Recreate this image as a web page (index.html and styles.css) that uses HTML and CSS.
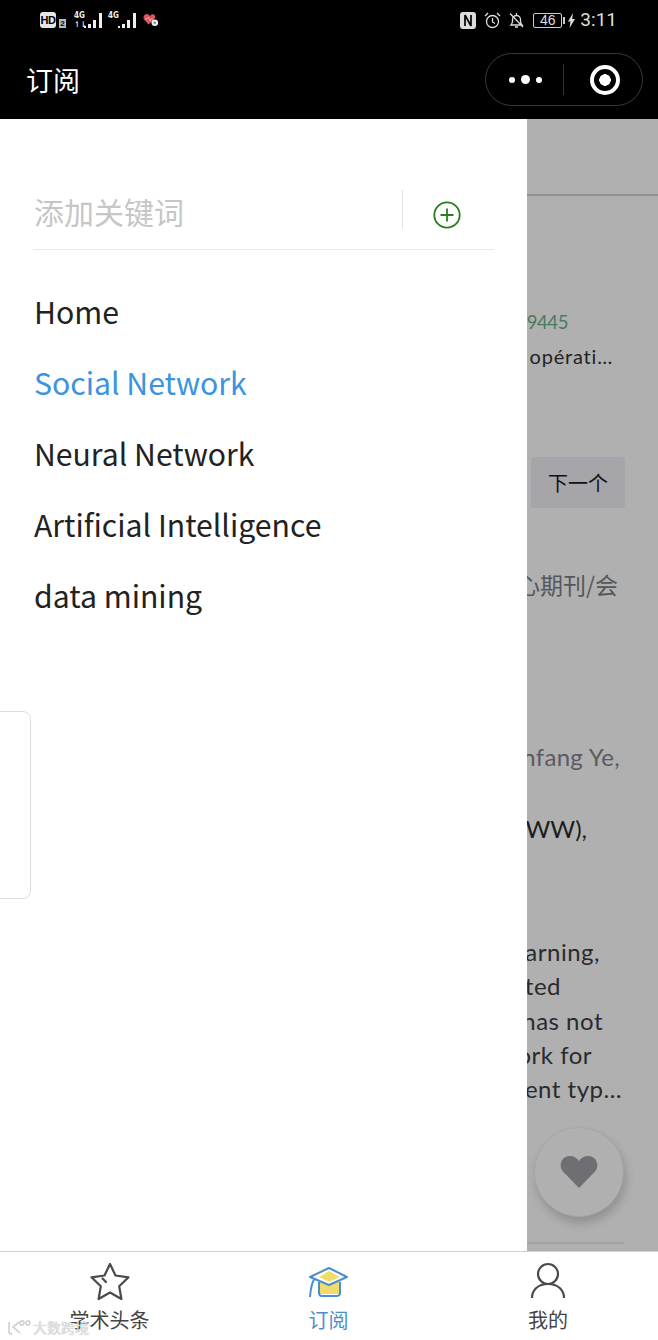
FILE: index.html
```html
<!DOCTYPE html>
<html lang="zh">
<head>
<meta charset="utf-8">
<title>订阅</title>
<link rel="stylesheet" href="styles.css">
</head>
<body>
<div class="phone">
  <header class="top">
    <div class="status">
      <div class="status-left">
        <span class="hd">HD</span><span class="sim">2</span>
        <span class="net"><span class="net-labels"><i>4G</i><i>↿⇂</i></span>
          <svg class="bars" width="19" height="18" viewBox="0 0 19 18"><path d="M0 15h2v2H0zM4 13h3v4H4zM9 9h3v8H9zM15 2h3v15h-3z" fill="#eee"/></svg></span>
        <span class="net"><span class="net-labels"><i>4G</i><i>&nbsp;</i></span>
          <svg class="bars" width="19" height="18" viewBox="0 0 19 18"><path d="M0 15h2v2H0zM4 13h3v4H4zM9 9h3v8H9zM15 2h3v15h-3z" fill="#eee"/></svg></span>
        <svg class="health" width="16" height="14" viewBox="0 0 16 14"><path d="M5.500 11.500 1 6.500C-1 3 3-.5 5.500 1.500L7 3C9 0 13 1 12 5L8 9.500z" fill="#d9545c"/><path d="M2 6h2l1.500-2 1.500 4 1-2h2" fill="none" stroke="#f4c4c4" stroke-width=".7"/><circle cx="11.800" cy="9.800" r="3.300" fill="#eee"/><circle cx="11.800" cy="9.800" r="1.200" fill="#888"/></svg>
      </div>
      <div class="status-right">
        <svg class="nfc" width="16" height="17" viewBox="0 0 16 17"><rect width="16" height="17" rx="3" fill="#ddd"/><path d="M5 3v11M5 3l6 11M11 3v11" fill="none" stroke="#000" stroke-width="1.700"/></svg>
        <svg class="alarm" width="17" height="17" viewBox="0 0 17 17" fill="none" stroke="#ddd" stroke-width="1.300"><circle cx="8.500" cy="9.500" r="6"/><path d="M8.500 6v4l2.500 1.500M1 4l3-3M16 4l-3-3"/></svg>
        <svg class="bell" width="17" height="17" viewBox="0 0 17 17" fill="none" stroke="#ddd" stroke-width="1.300"><path d="M3 13c1-1 1.500-2 1.500-4V7.500a4 4 0 0 1 8 0V9c0 2 .5 3 1.500 4zM7 15h3M8.500 1v2M2 1.500l13 13.500"/></svg>
        <span class="battery"><span class="battery-body">46</span><span class="battery-tip"></span></span>
        <svg class="bolt" width="7" height="15" viewBox="0 0 7 15"><path d="M5 0 0 8.500h2.500L1.500 15 7 6H4.200z" fill="#ddd"/></svg>
        <span class="clock">3:11</span>
      </div>
    </div>
    <div class="nav">
      <h1 class="nav-title">订阅</h1>
      <div class="capsule">
        <div class="capsule-more"><i class="dot"></i><i class="dot dot-big"></i><i class="dot"></i></div>
        <div class="capsule-sep"></div>
        <div class="capsule-close"><i class="ring"></i></div>
      </div>
    </div>
  </header>

  <main class="main">
    <section class="backdrop">
      <div class="under-rule"></div>
      <p class="line l-doi">10.1145/3366423.3389445</p>
      <p class="line l-fr">de opérati…</p>
      <div class="next-row"><span class="next">下一个</span></div>
      <p class="line l-core">是否为核心期刊/会</p>
      <p class="line l-auth">Yanfang Ye,</p>
      <p class="line l-www">(WWW),</p>
      <p class="line l-abs l-first">learning,</p>
      <p class="line l-abs">related</p>
      <p class="line l-abs">has not</p>
      <p class="line l-abs">work for</p>
      <p class="line l-abs">different typ…</p>
      <button class="fab" aria-label="收藏">
        <svg width="38" height="32" viewBox="0 0 38 32"><path d="M19 32 3 15.500C-2 9.500 1.500 0 10 0c4 0 7 2 9 5 2-3 5-5 9-5 8.500 0 12 9.500 7 15.500z" fill="#6e6e73"/></svg>
      </button>
      <div class="under-end"></div>
    </section>
    <aside class="drawer">
      <div class="search">
        <span class="search-input">添加关键词</span>
        <span class="search-sep"></span>
        <span class="search-add">
          <svg width="28" height="28" viewBox="0 0 28 28" fill="none" stroke="#2a7a22" stroke-width="1.800"><circle cx="14" cy="14" r="12.700"/><path d="M14 7.500v13M7.500 14h13"/></svg>
        </span>
      </div>
      <ul class="menu">
        <li>Home</li>
        <li class="active">Social Network</li>
        <li>Neural Network</li>
        <li>Artificial Intelligence</li>
        <li>data mining</li>
      </ul>
      <div class="ghost-card"></div>
    </aside>
  </main>

  <nav class="tabs">
    <div class="tab">
      <svg width="44" height="40" viewBox="0 0 44 40" fill="none" stroke="#4a4a4a" stroke-width="2.200" stroke-linejoin="round" stroke-linecap="round"><path d="M22 2l5.500 11.500 13 1.800-9.300 9 2.200 12.700L22 30.500 10.600 37l2.200-12.700-9.300-9 13-1.800z"/><path d="M14.500 16.500l3.500 3.500"/></svg>
      <span>学术头条</span>
    </div>
    <div class="tab tab-active">
      <svg width="44" height="40" viewBox="0 0 44 40"><path d="M13 18v14h20V18z" fill="#f0dc6a"/><path d="M3 35q1-14 5-19M12 20v11q0 3 3 3h14q4 0 4-3V20" fill="none" stroke="#4a8fcb" stroke-width="2"/><path d="M22 6 3 15l19 8 18-8z" fill="#fff" stroke="#4a8fcb" stroke-width="2" stroke-linejoin="round"/><path d="M22 9 12 15l10 5 11-5z" fill="#f0dc6a"/></svg>
      <span>订阅</span>
    </div>
    <div class="tab">
      <svg width="44" height="40" viewBox="0 0 44 40" fill="none" stroke="#4a4a4a" stroke-width="2.200"><circle cx="22" cy="12" r="10"/><path d="M6 36c0-8 6-14 16-14s16 6 16 14"/></svg>
      <span>我的</span>
    </div>
  </nav>
  <div class="watermark">
    <svg width="25" height="15" viewBox="0 0 25 15" fill="none" stroke="#d4d4d4" stroke-width="1.800"><path d="M2 2v10q0 2 3 2M12 2 6 7l7 6"/><circle cx="15" cy="3" r="2"/><circle cx="21" cy="3" r="2"/></svg>
    <span>大数跨境</span>
  </div>
</div>
</body>
</html>
```
FILE: styles.css
```css
* { box-sizing: border-box; }
html, body { margin: 0; padding: 0; }
body {
  width: 658px;
  height: 1340px;
  overflow: hidden;
  background: #fff;
  font-family: "Noto Sans CJK SC", sans-serif;
}
.phone { position: relative; display: flex; flex-direction: column; width: 658px; height: 1340px; }
.top { background: #000; height: 119px; flex: none; color: #fff; }
.status { height: 40px; display: flex; justify-content: space-between; align-items: center; padding: 0 41px 0 40px; }
.status-left, .status-right { display: flex; align-items: center; }
.status-left { gap: 3px; }
.status-right { gap: 5px; }
.hd { background: #e6e6e6; color: #000; font: 700 11px/16px "Liberation Sans", sans-serif; width: 16px; height: 16px; border-radius: 3px; text-align: center; letter-spacing: -0.5px; }
.sim { background: #bbb; color: #000; font: 700 8px/9px "Liberation Sans", sans-serif; width: 7px; height: 9px; margin-top: 6px; text-align: center; }
.net { display: flex; align-items: flex-end; margin-left: 5px; }
.net-labels { display: flex; flex-direction: column; font: 700 8px/9px "DejaVu Sans Condensed", "DejaVu Sans", sans-serif; color: #eee; margin-right: -1px; width: 11px; white-space: nowrap; }
.net-labels i { font-style: normal; }
.net + .net { margin-left: 2px; }
.health { margin-left: 3px; }
.nfc { margin-right: 3px; }
.alarm { margin-right: 2px; }
.bell { margin-right: 3px; }
.battery { display: flex; align-items: center; }
.battery-body { width: 29px; height: 15px; border: 1px solid #ccc; border-radius: 2px; font: 14px/13px "Liberation Sans", sans-serif; color: #ddd; text-align: center; }
.battery-tip { width: 2px; height: 7px; background: #ccc; margin-left: 1px; }
.bolt { margin-left: -2px; }
.clock { font: 19px/20px "Roboto", sans-serif; color: #ddd; }
.nav { height: 79px; display: flex; justify-content: space-between; align-items: center; padding: 0 15px 0 26px; }
.nav-title { margin: 0; font: 400 27px/34px "Noto Sans CJK SC", sans-serif; color: #fff; }
.capsule { width: 158px; height: 53px; border: 1px solid #3a3a3a; border-radius: 27px; display: flex; align-items: center; }
.capsule-more { flex: 1; display: flex; justify-content: center; align-items: center; gap: 6px; padding-left: 2px; }
.dot { width: 6px; height: 6px; border-radius: 50%; background: #fff; }
.dot-big { width: 9px; height: 9px; }
.capsule-sep { width: 1px; height: 31px; background: #333; }
.capsule-close { width: 78px; display: flex; justify-content: center; padding-left: 3px; }
.ring { width: 30px; height: 30px; border-radius: 50%; border: 4px solid #fff; background: radial-gradient(circle, #fff 0 5.500px, #000 6px); }

.main { flex: 1; position: relative; display: flex; justify-content: flex-end; overflow: hidden; }
.drawer { position: absolute; left: 0; top: 0; bottom: 0; width: 527px; background: #fff; padding: 71px 33px 0 33px; }
.search { display: flex; align-items: center; height: 60px; border-bottom: 1px solid #e8e8e8; padding-left: 1px; }
.search-input { flex: 1; font: 400 30px/44px "Noto Sans CJK SC", sans-serif; color: #c6c6c6; margin-top: -17px; }
.search-sep { width: 1px; height: 39px; background: #e4e4e4; margin-top: -20px; }
.search-add { width: 91px; display: flex; justify-content: center; margin-top: -10px; padding-right: 4px; }
.menu { list-style: none; margin: 26px 0 0; padding: 0 0 0 1px; font-size: 30.200px; color: #222; }
.menu li { height: 71px; line-height: 71px; white-space: nowrap; }
.menu .active { color: #3c93e0; }
.ghost-card { position: absolute; left: -10px; top: 592px; width: 41px; height: 188px; border: 1px solid #dedede; border-radius: 8px; }

.backdrop { width: 131px; background: #b0b0b0; overflow: hidden; position: relative; display: flex; flex-direction: column; color: #2a2a2a; font-family: "Lato", "Noto Sans CJK SC", sans-serif; font-size: 24px; flex: none; }
.under-rule { height: 2px; background: #8f9299; margin-top: 75px; flex: none; }
.line { margin: 0; display: flex; justify-content: flex-end; white-space: nowrap; flex: none; }
.l-doi { margin-top: 113px; font-size: 18.500px; line-height: 26px; letter-spacing: -.4px; color: #4a7a62; padding-right: 90px; }
.l-fr { margin-top: 7px; font-size: 20px; line-height: 28px; color: #222; padding-right: 45px; letter-spacing: .8px; }
.next-row { margin-top: 87px; padding: 0 33px 0 4px; }
.next { display: flex; height: 51px; width: 94px; background: #a6a6aa; border-radius: 3px; justify-content: center; align-items: center; font: 400 20px/28px "Noto Sans CJK SC", sans-serif; color: #111; }
.l-core { margin-top: 59px; line-height: 34px; color: #55565c; padding-right: 40px; font-family: "Noto Sans CJK SC", sans-serif; font-size: 23px; }
.l-auth { margin-top: 139px; line-height: 34px; color: #5a5b62; padding-right: 38px; letter-spacing: .3px; }
.l-www { margin-top: 38px; line-height: 34px; color: #1c1c1f; padding-right: 71px; }
.l-abs { line-height: 34.250px; color: #2a2a2d; letter-spacing: .5px; }
.l-first { margin-top: 89px; padding-right: 58px; }
.l-abs:nth-of-type(7) { padding-right: 97px; }
.l-abs:nth-of-type(8) { padding-right: 55px; }
.l-abs:nth-of-type(9) { padding-right: 66px; }
.l-abs:nth-of-type(10) { padding-right: 36px; }
.fab { position: absolute; left: 7px; top: 1008px; width: 90px; height: 90px; border: 1px solid #a6a6a6; border-radius: 50%; background: #b0b0b0; box-shadow: 2px 6px 10px rgba(0,0,0,.18); display: flex; align-items: center; justify-content: center; padding: 0; }
.under-end { position: absolute; left: 0; top: 1123px; width: 97px; height: 2px; background: #a3a3a3; }

.tabs { height: 89px; flex: none; border-top: 1px solid #cfcfcf; background: #fff; display: grid; grid-template-columns: 219px 219px 220px; }
.tab { display: flex; flex-direction: column; align-items: center; color: #444; font: 400 20px/24px "Noto Sans CJK SC", sans-serif; padding-top: 10px; }
.tab svg { display: block; margin-bottom: 6px; }
.tab-active { color: #4a8fcb; }
.watermark { position: absolute; left: 7px; bottom: 5px; display: flex; align-items: center; gap: 1px; color: #dedede; text-shadow: 0 0 1px #bbb; font: 400 14px/16px "Noto Sans CJK SC", sans-serif; }
```
